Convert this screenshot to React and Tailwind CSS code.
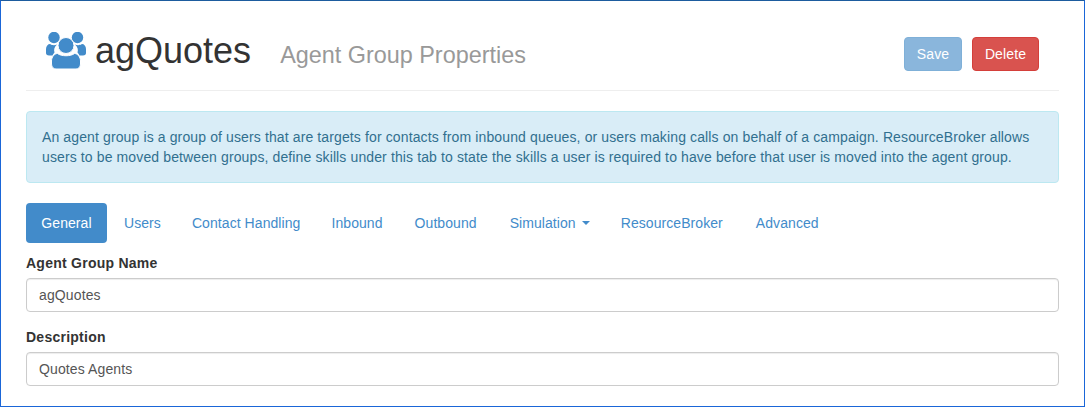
import React from "react";

function Logo() {
  return (
    <svg width="40" height="37" viewBox="0 0 40 37" className="block">
      <g fill="#428bca">
        <circle cx="8" cy="5.5" r="5.7" />
        <circle cx="31.500" cy="5.5" r="5.7" />
        <path d="M0 17c0-3 2-5 4-5 2 1.500 5 1.500 7 .5-2.500 2-3.500 5-2.500 8-1 1-1.500 2-2 3H3c-2 0-3-1-3-2.500z" />
        <path d="M40 17c0-3-2-5-4-5-2 1.500-5 1.500-7 .5 2.500 2 3.500 5 2.500 8 1 1 1.500 2 2 3h3.500c2 0 3-1 3-2.500z" />
        <circle cx="20" cy="13.500" r="8" stroke="#fff" strokeWidth="1" />
        <path d="M5.500 29c0-4 3-7.500 6-7.500 4 3 13 3 17 0 3 0 6 3.500 6 7.500v3c0 3-2 5-4.500 5H10c-2.500 0-4.500-2-4.500-5z" stroke="#fff" strokeWidth="1" />
      </g>
    </svg>
  );
}

const tabs = [
  ["Users", "px-[15px] py-[10px] mr-[1px]"],
  ["Contact Handling", "px-[15px] py-[10px] mr-[1px]"],
  ["Inbound", "px-[15px] py-[10px] mr-[2px]"],
  ["Outbound", "px-[15px] py-[10px] mr-[3px]"],
];

export default function App() {
  return (
    <div className="w-[1085px] h-[407px] overflow-hidden bg-white border border-[#1a66d8] border-t-[#1d5c9e] font-['Liberation_Sans',Arial,sans-serif] text-[14px] tracking-[0.12px] text-[#333]">
      <div className="px-[25px]">
        <div className="flex items-start h-[90px] border-b border-[#eee]">
          <div className="mt-[31px] ml-[20px]"><Logo /></div>
          <div className="ml-[9px] mt-[30px] text-[36px] leading-[40px] tracking-normal">agQuotes</div>
          <div className="ml-[29px] mt-[41px] text-[23.4px] leading-[26px] tracking-normal text-[#999]">Agent Group Properties</div>
          <div className="ml-auto mr-[20px] mt-[36px] flex gap-[10px]">
            <button className="h-[34px] w-[58px] rounded bg-[#8ab6dc] border border-[#7fb0d8] text-white">Save</button>
            <button className="h-[34px] w-[67px] rounded bg-[#d9534f] border border-[#d43f3a] text-white">Delete</button>
          </div>
        </div>
        <div className="mt-5 w-[1033px] h-[72px] px-[15px] py-[15px] rounded bg-[#d9edf7] border border-[#bce8f1] text-[#31708f] leading-[20px]">
          An agent group is a group of users that are targets for contacts from inbound queues, or users making calls on behalf of a campaign. ResourceBroker allows users to be moved between groups, define skills under this tab to state the skills a user is required to have before that user is moved into the agent group.
        </div>
        <div className="mt-5 flex text-[#428bca] leading-[20px] tracking-[0.07px]">
          <div className="w-[81px] py-[10px] mr-[2px] rounded bg-[#428bca] text-white text-center">General</div>
          {tabs.map(([t, c]) => (
            <div key={t} className={c}>{t}</div>
          ))}
          <div className="px-[15px] py-[10px] mr-[1px] flex items-center">
            Simulation
            <span className="ml-[6px] w-0 h-0 border-x-4 border-x-transparent border-t-4 border-t-[#428bca]" />
          </div>
          <div className="px-[15px] py-[10px] mr-[3px]">ResourceBroker</div>
          <div className="px-[15px] py-[10px]">Advanced</div>
        </div>
        <div className="mt-[10px] font-bold leading-[20px] tracking-[0.25px]">Agent Group Name</div>
        <div className="mt-[5px] w-[1033px] h-[34px] flex items-center px-3 rounded border border-[#ccc] text-[#555] shadow-[inset_0_1px_1px_rgba(0,0,0,0.075)]">agQuotes</div>
        <div className="mt-[15px] font-bold leading-[20px] tracking-[0.25px]">Description</div>
        <div className="mt-[5px] w-[1033px] h-[34px] flex items-center px-3 rounded border border-[#ccc] text-[#555] shadow-[inset_0_1px_1px_rgba(0,0,0,0.075)]">Quotes Agents</div>
      </div>
    </div>
  );
}
